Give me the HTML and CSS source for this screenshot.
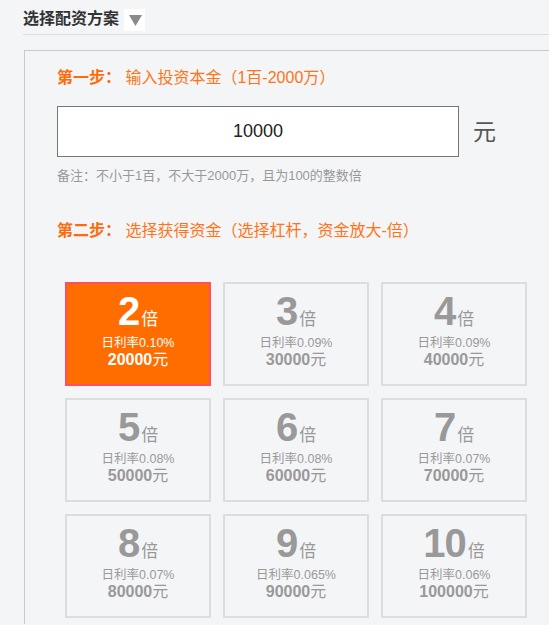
FILE: index.html
```html
<!DOCTYPE html>
<html lang="zh-CN">
<head>
<meta charset="utf-8">
<title>选择配资方案</title>
<link rel="stylesheet" href="styles.css">
</head>
<body>
<div class="header">
  <span class="header-title">选择配资方案</span>
  <span class="toggle"><svg width="21" height="22" viewBox="0 0 21 22"><polygon points="5,6 18,6 11.5,17" fill="#8a8a8a"/></svg></span>
</div>
<div class="panel">
  <div class="step"><b>第一步：</b> 输入投资本金（1百-2000万）</div>
  <div class="input-row">
    <div class="input">10000</div>
    <span class="unit">元</span>
  </div>
  <div class="note">备注：不小于1百，不大于2000万，且为100的整数倍</div>
  <div class="step step2"><b>第二步：</b> 选择获得资金（选择杠杆，资金放大-倍）</div>
  <div class="grid">
    <div class="card selected"><div class="mult"><span class="num">2</span><span class="bei">倍</span></div><div class="rate">日利率0.10%</div><div class="amt">20000<span class="yuan">元</span></div></div>
    <div class="card"><div class="mult"><span class="num">3</span><span class="bei">倍</span></div><div class="rate">日利率0.09%</div><div class="amt">30000<span class="yuan">元</span></div></div>
    <div class="card"><div class="mult"><span class="num">4</span><span class="bei">倍</span></div><div class="rate">日利率0.09%</div><div class="amt">40000<span class="yuan">元</span></div></div>
    <div class="card"><div class="mult"><span class="num">5</span><span class="bei">倍</span></div><div class="rate">日利率0.08%</div><div class="amt">50000<span class="yuan">元</span></div></div>
    <div class="card"><div class="mult"><span class="num">6</span><span class="bei">倍</span></div><div class="rate">日利率0.08%</div><div class="amt">60000<span class="yuan">元</span></div></div>
    <div class="card"><div class="mult"><span class="num">7</span><span class="bei">倍</span></div><div class="rate">日利率0.07%</div><div class="amt">70000<span class="yuan">元</span></div></div>
    <div class="card"><div class="mult"><span class="num">8</span><span class="bei">倍</span></div><div class="rate">日利率0.07%</div><div class="amt">80000<span class="yuan">元</span></div></div>
    <div class="card"><div class="mult"><span class="num">9</span><span class="bei">倍</span></div><div class="rate">日利率0.065%</div><div class="amt">90000<span class="yuan">元</span></div></div>
    <div class="card"><div class="mult"><span class="num">10</span><span class="bei">倍</span></div><div class="rate">日利率0.06%</div><div class="amt">100000<span class="yuan">元</span></div></div>
  </div>
</div>
</body>
</html>
```
FILE: styles.css
```css
* { box-sizing: border-box; }
html, body { margin: 0; padding: 0; }
body {
  background: #f4f5f7;
  font-family: "Liberation Sans", "Noto Sans CJK SC", sans-serif;
  color: #333;
  width: 549px;
  height: 625px;
  overflow: hidden;
}
.header {
  margin-left: 23px;
  height: 35px;
  border-bottom: 1px solid #dcdde0;
  display: flex;
  align-items: flex-start;
  padding-top: 8px;
}
.header-title {
  font-size: 16px;
  font-weight: bold;
  line-height: 21px;
  color: #333;
}
.toggle {
  display: block;
  width: 21px;
  height: 22px;
  background: #fff;
  margin-left: 5px;
  margin-top: 1px;
}
.toggle svg { display: block; }
.panel {
  margin-left: 24px;
  margin-top: 15px;
  height: 574px;
  border-top: 1px solid #c9cacd;
  border-left: 1px solid #c9cacd;
  padding: 15px 0 0 32px;
}
.step {
  font-size: 16px;
  line-height: 24px;
  color: #ff7417;
}
.step b { font-weight: bold; color: #ff6a0a; }
.input-row {
  display: flex;
  align-items: center;
  margin-top: 16px;
}
.input {
  width: 402px;
  height: 51px;
  border: 1px solid #777;
  background: #fff;
  font-size: 18px;
  line-height: 49px;
  text-align: center;
  color: #222;
}
.unit {
  margin-left: 14px;
  font-size: 23px;
  color: #555;
  line-height: 30px;
}
.note {
  margin-top: 9px;
  font-size: 13px;
  line-height: 20px;
  color: #999;
}
.step2 { margin-top: 33px; }
.grid {
  margin-top: 39px;
  margin-left: 8px;
  display: grid;
  grid-template-columns: repeat(3, 146px);
  grid-auto-rows: 104px;
  gap: 12px;
}
.card {
  border: 2px solid #dcdddf;
  display: flex;
  flex-direction: column;
  align-items: center;
  padding-top: 7px;
  color: #999;
}
.card.selected {
  background: #ff6d00;
  border-color: #ff5063;
  color: #fff;
}
.mult {
  line-height: 40px;
  height: 40px;
  white-space: nowrap;
}
.num {
  font-size: 40px;
  font-weight: bold;
  letter-spacing: -1px;
}
.bei {
  font-size: 17px;
  margin-left: 2px;
}
.rate {
  margin-top: 5px;
  font-size: 12.5px;
  line-height: 15px;
}
.amt {
  font-size: 16px;
  font-weight: bold;
  line-height: 18px;
}
.yuan { font-weight: normal; font-size: 16px; }
```
